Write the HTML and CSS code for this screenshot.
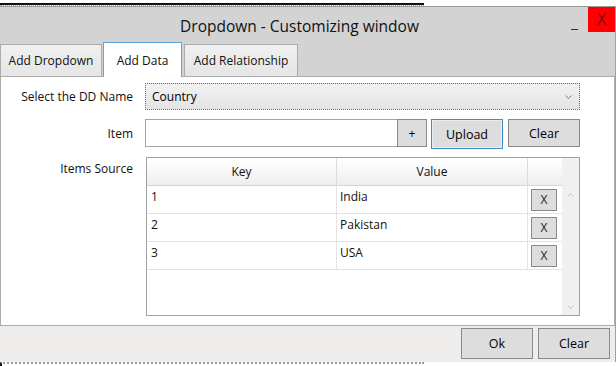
FILE: index.html
```html
<!DOCTYPE html>
<html>
<head>
<meta charset="utf-8">
<link rel="stylesheet" href="styles.css">
</head>
<body>
<div class="top"><div class="topline"></div></div>
<div class="window">
  <div class="titlebar">
    <div class="title">Dropdown - Customizing window</div>
    <div class="min" title="Minimize"></div>
    <div class="close">X</div>
  </div>
  <div class="tabs">
    <div class="tab tab1">Add Dropdown</div>
    <div class="tab tab2 active">Add Data</div>
    <div class="tab tab3">Add Relationship</div>
  </div>
  <div class="panel">
    <div class="form">
      <div class="lbl">Select the DD Name</div>
      <div class="combo">
        <span>Country</span>
        <svg class="chev" width="7" height="4" viewBox="0 0 7 4"><polyline points="0.5,0.5 3.5,3.5 6.5,0.5" fill="none" stroke="#7a7a7a" stroke-width="1"/></svg>
      </div>
      <div class="lbl">Item</div>
      <div class="itemrow">
        <div class="textbox"></div>
        <button class="btn plus">+</button>
        <button class="btn upload">Upload</button>
        <button class="btn clear">Clear</button>
      </div>
      <div class="lbl lbl-top">Items Source</div>
      <div class="dg">
        <div class="dg-main">
          <div class="dg-row dg-head">
            <div class="c ck">Key</div>
            <div class="c cv">Value</div>
            <div class="c cd"></div>
          </div>
          <div class="dg-row">
            <div class="c ck">1</div>
            <div class="c cv">India</div>
            <div class="c cd"><button class="xbtn">X</button></div>
          </div>
          <div class="dg-row">
            <div class="c ck">2</div>
            <div class="c cv">Pakistan</div>
            <div class="c cd"><button class="xbtn">X</button></div>
          </div>
          <div class="dg-row">
            <div class="c ck">3</div>
            <div class="c cv">USA</div>
            <div class="c cd"><button class="xbtn">X</button></div>
          </div>
        </div>
        <div class="dg-scroll">
          <svg width="7" height="4" viewBox="0 0 7 4"><polyline points="0.5,3.5 3.5,0.5 6.5,3.5" fill="none" stroke="#c2c2c2" stroke-width="1"/></svg>
          <svg width="7" height="4" viewBox="0 0 7 4"><polyline points="0.5,0.5 3.5,3.5 6.5,0.5" fill="none" stroke="#c2c2c2" stroke-width="1"/></svg>
        </div>
      </div>
    </div>
  </div>
  <div class="footer">
    <button class="btn fbtn">Ok</button>
    <button class="btn fbtn">Clear</button>
  </div>
</div>
<div class="bottom"></div>
</body>
</html>
```

FILE: styles.css
```css
* { box-sizing: border-box; }
html, body { margin: 0; padding: 0; }
body {
  width: 616px;
  height: 366px;
  overflow: hidden;
  background: #fff;
  font-family: "Open Sans", "Noto Sans", sans-serif;
  font-size: 12px;
  color: #000;
}
button { font-family: inherit; font-size: inherit; color: inherit; padding: 0; margin: 0; }

.top {
  height: 7px;
  padding-top: 3px;
  border-bottom: 1px solid #9a9a9a;
}
.topline {
  width: 424px;
  height: 3px;
  border-top: 2px solid #111;
  border-bottom: 1px dotted #b0b0b0;
}

.window {
  width: 616px;
  height: 355px;
  background: #d3d3d3;
  border-right: 1px solid #a0a0a0;
  display: flex;
  flex-direction: column;
}

.titlebar {
  height: 35px;
  display: flex;
  align-items: flex-start;
  flex-shrink: 0;
}
.title {
  flex: 1;
  padding-left: 28px;
  padding-top: 8px;
  text-align: center;
  font-size: 15.5px;
  line-height: 22px;
  color: #111;
}
.min {
  width: 7px;
  height: 1px;
  background: #333;
  margin-top: 22px;
  margin-right: 10px;
}
.close {
  width: 27px;
  height: 25px;
  background: #ff0000;
  color: #7a1010;
  font-size: 16px;
  line-height: 25px;
  text-align: center;
}

.tabs {
  height: 34px;
  display: flex;
  align-items: flex-end;
  flex-shrink: 0;
  position: relative;
  z-index: 1;
}
.tab {
  height: 32px;
  border: 1px solid #acacac;
  border-bottom: none;
  background: linear-gradient(#f0f0f0, #e5e5e5);
  display: flex;
  align-items: center;
  justify-content: center;
  color: #111;
}
.tab1 { width: 102px; }
.tab2 { width: 79px; margin-left: 1px; }
.tab3 { width: 114px; margin-left: 2px; }
.tab.active {
  height: 35px;
  margin-bottom: -1px;
  background: #fff;
  border: 1px solid #5aa7dc;
  border-bottom: none;
}

.panel {
  height: 250px;
  flex-shrink: 0;
  background: #fff;
  border: 1px solid #acacac;
  padding: 6px 34px 0 0;
}
.form {
  display: grid;
  grid-template-columns: 132px 1fr;
  column-gap: 12px;
  row-gap: 9px;
  align-items: center;
}
.lbl {
  text-align: right;
  color: #111;
  line-height: 16px;
}
.lbl-top { align-self: start; padding-top: 3px; }

.combo {
  height: 27px;
  border: 1px dotted #6a6a6a;
  background: linear-gradient(#f2f2f2, #e4e4e4);
  display: flex;
  align-items: center;
  justify-content: space-between;
  padding: 0 7px 0 6px;
}
.chev { margin-top: 1px; }

.itemrow {
  display: flex;
  align-items: flex-start;
}
.textbox {
  width: 252px;
  height: 28px;
  border: 1px solid #a5a5a5;
  border-right: none;
  background: #fff;
}
.btn {
  background: #dddddd;
  border: 1px solid #8a8a8a;
  height: 28px;
  text-align: center;
}
.plus { width: 30px; }
.upload {
  width: 72px;
  height: 30px;
  margin-left: 4px;
  border: 1px solid #3c8ec4;
  box-shadow: inset 0 0 0 1px #e6eef4;
  font-size: 12.5px;
}
.clear { width: 72px; margin-left: 5px; font-size: 12.5px; }

.dg {
  margin-left: 1px;
  margin-top: -1px;
  height: 159px;
  border: 1px solid #a0a0a0;
  display: flex;
}
.dg-main {
  flex: 1;
  display: flex;
  flex-direction: column;
}
.dg-row {
  height: 28px;
  display: grid;
  grid-template-columns: 190px 191px 33px;
  border-bottom: 1px solid #e3e3e3;
}
.dg-head {
  background: linear-gradient(#ffffff, #eeeeee);
  border-bottom: 1px solid #d5d5d5;
}
.c {
  padding: 3px 0 0 4px;
  line-height: 16px;
  color: #111;
}
.cv { padding-left: 3px; }
.ck, .cv { border-right: 1px solid #e3e3e3; }
.dg-head .c {
  text-align: center;
  padding: 0;
  line-height: 27px;
}
.dg-head .ck, .dg-head .cv { border-right-color: #dcdcdc; }
.cd {
  padding: 3px 0 0 3px;
}
.xbtn {
  width: 26px;
  height: 22px;
  background: #dddddd;
  border: 1px solid #8a8a8a;
  line-height: 20px;
  font-size: 12px;
  color: #222;
}
.dg-scroll {
  width: 17px;
  background: #f0f0f0;
  display: flex;
  flex-direction: column;
  justify-content: space-between;
  align-items: center;
  padding: 35px 0 6px;
}

.footer {
  height: 36px;
  flex-shrink: 0;
  background: #efecec;
  display: flex;
  justify-content: flex-end;
  align-items: flex-start;
  padding: 2px 5px 0 0;
  gap: 5px;
}
.fbtn {
  width: 72px;
  height: 31px;
  font-size: 12.5px;
}

.bottom {
  height: 4px;
  width: 424px;
  border-top: 2px dotted #9a9a9a;
  border-left: 2px solid #111;
}
```
